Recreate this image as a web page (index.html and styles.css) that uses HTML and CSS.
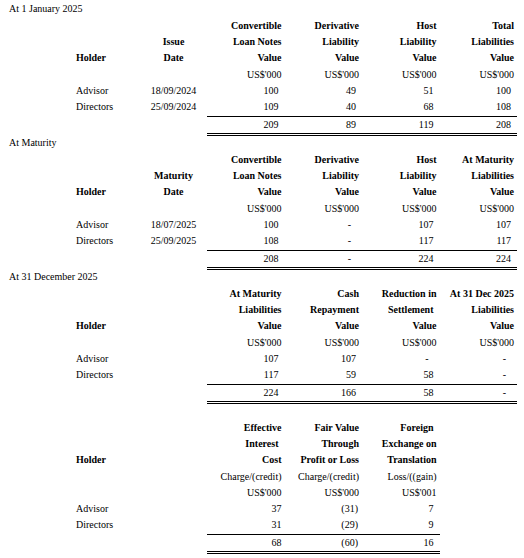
FILE: index.html
```html
<!DOCTYPE html>
<html>
<head>
<meta charset="utf-8">
<link rel="stylesheet" href="styles.css">
</head>
<body>
<table class="fin">
  <colgroup>
    <col class="c-holder"><col class="c-date"><col class="c-num"><col class="c-num"><col class="c-num"><col class="c-num">
  </colgroup>
  <tbody>
    <tr class="title"><td colspan="6">At 1 January 2025</td></tr>
    <tr class="hd"><td></td><td></td><td class="h">Convertible</td><td class="h">Derivative</td><td class="h">Host</td><td class="h">Total</td></tr>
    <tr class="hd"><td></td><td class="dt">Issue</td><td class="h">Loan Notes</td><td class="h">Liability</td><td class="h">Liability</td><td class="h">Liabilities</td></tr>
    <tr class="hd"><td class="hold">Holder</td><td class="dt">Date</td><td class="h">Value</td><td class="h">Value</td><td class="h">Value</td><td class="h">Value</td></tr>
    <tr><td></td><td></td><td class="u">US$'000</td><td class="u">US$'000</td><td class="u">US$'000</td><td class="u">US$'000</td></tr>
    <tr><td class="name">Advisor</td><td class="date">18/09/2024</td><td class="n">100</td><td class="n">49</td><td class="n">51</td><td class="n">100</td></tr>
    <tr><td class="name">Directors</td><td class="date">25/09/2024</td><td class="n">109</td><td class="n">40</td><td class="n">68</td><td class="n">108</td></tr>
    <tr class="tot"><td></td><td></td><td class="n">209</td><td class="n">89</td><td class="n">119</td><td class="n">208</td></tr>

    <tr class="title"><td colspan="6">At Maturity</td></tr>
    <tr class="hd"><td></td><td></td><td class="h">Convertible</td><td class="h">Derivative</td><td class="h">Host</td><td class="h">At Maturity</td></tr>
    <tr class="hd"><td></td><td class="dt">Maturity</td><td class="h">Loan Notes</td><td class="h">Liability</td><td class="h">Liability</td><td class="h">Liabilities</td></tr>
    <tr class="hd"><td class="hold">Holder</td><td class="dt">Date</td><td class="h">Value</td><td class="h">Value</td><td class="h">Value</td><td class="h">Value</td></tr>
    <tr><td></td><td></td><td class="u">US$'000</td><td class="u">US$'000</td><td class="u">US$'000</td><td class="u">US$'000</td></tr>
    <tr><td class="name">Advisor</td><td class="date">18/07/2025</td><td class="n">100</td><td class="d">-</td><td class="n">107</td><td class="n">107</td></tr>
    <tr><td class="name">Directors</td><td class="date">25/09/2025</td><td class="n">108</td><td class="d">-</td><td class="n">117</td><td class="n">117</td></tr>
    <tr class="tot"><td></td><td></td><td class="n">208</td><td class="d">-</td><td class="n">224</td><td class="n">224</td></tr>

    <tr class="title"><td colspan="6">At 31 December 2025</td></tr>
    <tr class="hd"><td></td><td></td><td class="h">At Maturity</td><td class="h">Cash</td><td class="h">Reduction in</td><td class="h">At 31 Dec 2025</td></tr>
    <tr class="hd"><td></td><td></td><td class="h">Liabilities</td><td class="h">Repayment</td><td class="h sp">Settlement</td><td class="h">Liabilities</td></tr>
    <tr class="hd"><td class="hold">Holder</td><td></td><td class="h">Value</td><td class="h">Value</td><td class="h">Value</td><td class="h">Value</td></tr>
    <tr><td></td><td></td><td class="u">US$'000</td><td class="u">US$'000</td><td class="u">US$'000</td><td class="u">US$'000</td></tr>
    <tr><td class="name">Advisor</td><td></td><td class="n">107</td><td class="n">107</td><td class="d">-</td><td class="d">-</td></tr>
    <tr><td class="name">Directors</td><td></td><td class="n">117</td><td class="n">59</td><td class="n">58</td><td class="d">-</td></tr>
    <tr class="tot"><td></td><td></td><td class="n">224</td><td class="n">166</td><td class="n">58</td><td class="d">-</td></tr>

    <tr class="title"><td colspan="6"></td></tr>
    <tr class="hd"><td></td><td></td><td class="h">Effective</td><td class="h">Fair Value</td><td class="h sp">Foreign</td><td></td></tr>
    <tr class="hd"><td></td><td></td><td class="h sp">Interest</td><td class="h">Through</td><td class="h">Exchange on</td><td></td></tr>
    <tr class="hd"><td class="hold">Holder</td><td></td><td class="h">Cost</td><td class="h">Profit or Loss</td><td class="h">Translation</td><td></td></tr>
    <tr><td></td><td></td><td class="u">Charge/(credit)</td><td class="u">Charge/(credit)</td><td class="u">Loss/((gain)</td><td></td></tr>
    <tr><td></td><td></td><td class="u">US$'000</td><td class="u">US$'000</td><td class="u">US$'001</td><td></td></tr>
    <tr><td class="name">Advisor</td><td></td><td class="n n3">37</td><td class="n n4">(31)</td><td class="n">7</td><td></td></tr>
    <tr><td class="name">Directors</td><td></td><td class="n n3">31</td><td class="n n4">(29)</td><td class="n">9</td><td></td></tr>
    <tr class="tot"><td></td><td></td><td class="n n3">68</td><td class="n n4">(60)</td><td class="n">16</td><td class="none"></td></tr>
  </tbody>
</table>
</body>
</html>
```

FILE: styles.css
```css
html, body {
  margin: 0;
  padding: 0;
  background: #ffffff;
}

body {
  font-family: "Liberation Serif", "Times New Roman", serif;
  font-size: 10px;
  color: #000000;
}

.fin {
  margin-top: 2px;
  width: 517px;
  table-layout: fixed;
  border-collapse: separate;
  border-spacing: 0;
}

.c-holder { width: 140px; }
.c-date { width: 67px; }
.c-num { width: 77.5px; }

.fin td {
  padding: 0;
  height: 16.33px;
  line-height: 16.33px;
  white-space: nowrap;
  vertical-align: middle;
}

.fin .title td {
  height: 15.67px;
  line-height: 13.67px;
  vertical-align: top;
  padding-left: 9px;
}

.hd td {
  font-weight: bold;
}

.fin .hold {
  padding-left: 76px;
  text-align: left;
}

.fin .name {
  padding-left: 76px;
}

.fin .dt,
.fin .date {
  text-align: center;
}

.fin .h,
.fin .u {
  text-align: right;
  padding-right: 3px;
}

.fin .h.sp {
  padding-right: 6px;
}

.fin .n {
  text-align: right;
  padding-right: 6px;
}

.fin .n.n3 { padding-right: 3px; }
.fin .n.n4 { padding-right: 4px; }

.fin .d {
  text-align: right;
  padding-right: 11px;
}

.tot td.n,
.tot td.d {
  border-top: 1px solid #000000;
  border-bottom: 3px double #000000;
}

.tot td.none {
  border: 0;
}
```
